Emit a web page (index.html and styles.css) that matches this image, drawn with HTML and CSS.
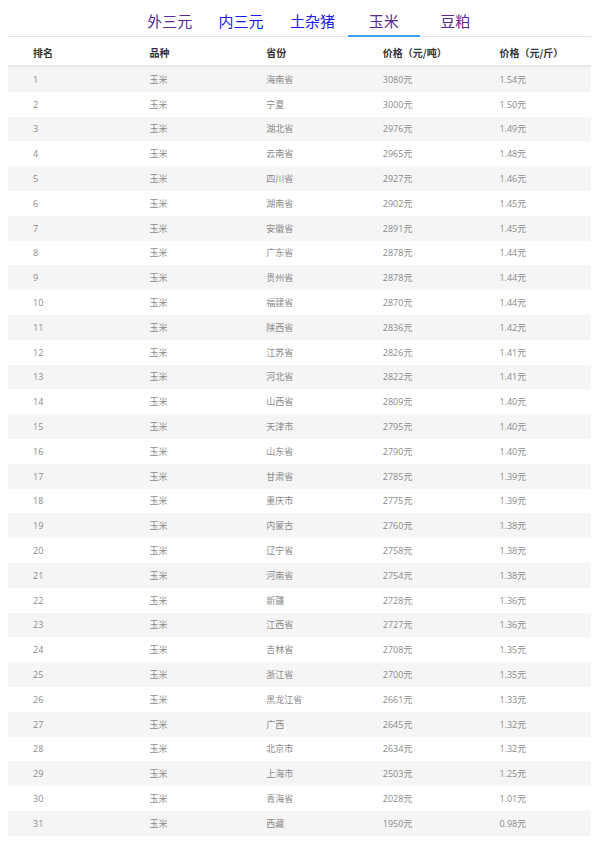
FILE: index.html
```html
<!DOCTYPE html>
<html lang="zh">
<head>
<meta charset="utf-8">
<link rel="stylesheet" href="styles.css">
</head>
<body>
<div class="page">
  <nav class="tabs">
    <a class="tab visited">外三元</a>
    <a class="tab link">内三元</a>
    <a class="tab link">土杂猪</a>
    <a class="tab visited active">玉米</a>
    <a class="tab visited">豆粕</a>
  </nav>
  <div class="table">
    <div class="row head"><span>排名</span><span>品种</span><span>省份</span><span>价格（元/吨）</span><span>价格（元/斤）</span></div>
    <div class="row"><span>1</span><span>玉米</span><span>海南省</span><span>3080元</span><span>1.54元</span></div>
    <div class="row"><span>2</span><span>玉米</span><span>宁夏</span><span>3000元</span><span>1.50元</span></div>
    <div class="row"><span>3</span><span>玉米</span><span>湖北省</span><span>2976元</span><span>1.49元</span></div>
    <div class="row"><span>4</span><span>玉米</span><span>云南省</span><span>2965元</span><span>1.48元</span></div>
    <div class="row"><span>5</span><span>玉米</span><span>四川省</span><span>2927元</span><span>1.46元</span></div>
    <div class="row"><span>6</span><span>玉米</span><span>湖南省</span><span>2902元</span><span>1.45元</span></div>
    <div class="row"><span>7</span><span>玉米</span><span>安徽省</span><span>2891元</span><span>1.45元</span></div>
    <div class="row"><span>8</span><span>玉米</span><span>广东省</span><span>2878元</span><span>1.44元</span></div>
    <div class="row"><span>9</span><span>玉米</span><span>贵州省</span><span>2878元</span><span>1.44元</span></div>
    <div class="row"><span>10</span><span>玉米</span><span>福建省</span><span>2870元</span><span>1.44元</span></div>
    <div class="row"><span>11</span><span>玉米</span><span>陕西省</span><span>2836元</span><span>1.42元</span></div>
    <div class="row"><span>12</span><span>玉米</span><span>江苏省</span><span>2826元</span><span>1.41元</span></div>
    <div class="row"><span>13</span><span>玉米</span><span>河北省</span><span>2822元</span><span>1.41元</span></div>
    <div class="row"><span>14</span><span>玉米</span><span>山西省</span><span>2809元</span><span>1.40元</span></div>
    <div class="row"><span>15</span><span>玉米</span><span>天津市</span><span>2795元</span><span>1.40元</span></div>
    <div class="row"><span>16</span><span>玉米</span><span>山东省</span><span>2790元</span><span>1.40元</span></div>
    <div class="row"><span>17</span><span>玉米</span><span>甘肃省</span><span>2785元</span><span>1.39元</span></div>
    <div class="row"><span>18</span><span>玉米</span><span>重庆市</span><span>2775元</span><span>1.39元</span></div>
    <div class="row"><span>19</span><span>玉米</span><span>内蒙古</span><span>2760元</span><span>1.38元</span></div>
    <div class="row"><span>20</span><span>玉米</span><span>辽宁省</span><span>2758元</span><span>1.38元</span></div>
    <div class="row"><span>21</span><span>玉米</span><span>河南省</span><span>2754元</span><span>1.38元</span></div>
    <div class="row"><span>22</span><span>玉米</span><span>新疆</span><span>2728元</span><span>1.36元</span></div>
    <div class="row"><span>23</span><span>玉米</span><span>江西省</span><span>2727元</span><span>1.36元</span></div>
    <div class="row"><span>24</span><span>玉米</span><span>吉林省</span><span>2708元</span><span>1.35元</span></div>
    <div class="row"><span>25</span><span>玉米</span><span>浙江省</span><span>2700元</span><span>1.35元</span></div>
    <div class="row"><span>26</span><span>玉米</span><span>黑龙江省</span><span>2661元</span><span>1.33元</span></div>
    <div class="row"><span>27</span><span>玉米</span><span>广西</span><span>2645元</span><span>1.32元</span></div>
    <div class="row"><span>28</span><span>玉米</span><span>北京市</span><span>2634元</span><span>1.32元</span></div>
    <div class="row"><span>29</span><span>玉米</span><span>上海市</span><span>2503元</span><span>1.25元</span></div>
    <div class="row"><span>30</span><span>玉米</span><span>青海省</span><span>2028元</span><span>1.01元</span></div>
    <div class="row"><span>31</span><span>玉米</span><span>西藏</span><span>1950元</span><span>0.98元</span></div>
  </div>
</div>
</body>
</html>
```
FILE: styles.css
```css
html, body {
  margin: 0;
  padding: 0;
  background: #fff;
}
.page {
  padding: 0 9px 0 8px;
  font-family: "Open Sans", "Noto Sans CJK SC", sans-serif;
}
.tabs {
  display: flex;
  padding-left: 126px;
  border-bottom: 1px solid #e3e3e3;
  height: 36px;
}
.tab {
  width: 71.4px;
  text-align: center;
  font-family: "Noto Sans CJK SC", sans-serif;
  font-size: 15px;
  line-height: 20px;
  padding-top: 11px;
  box-sizing: border-box;
  height: 37px;
  margin-bottom: -1px;
  text-decoration: none;
}
.tab.visited { color: #5b2a97; }
.tab.link { color: #1a1aee; }
.tab.active {
  border-bottom: 2px solid #3ea0f2;
}
.row {
  display: grid;
  grid-template-columns: repeat(5, 1fr);
  height: 24.8px;
  align-items: center;
  font-size: 9px;
  color: #8a8a8a;
}
.row span {
  padding-left: 25px;
}
.row:nth-child(even) {
  background: #f5f5f5;
}
.row.head {
  box-sizing: border-box;
  height: 30px;
  font-family: "Noto Sans CJK SC", sans-serif;
  font-size: 10px;
  font-weight: bold;
  color: #333;
  border-bottom: 2px solid #e8e8e8;
  background: #fff;
  padding-top: 2px;
}
```
